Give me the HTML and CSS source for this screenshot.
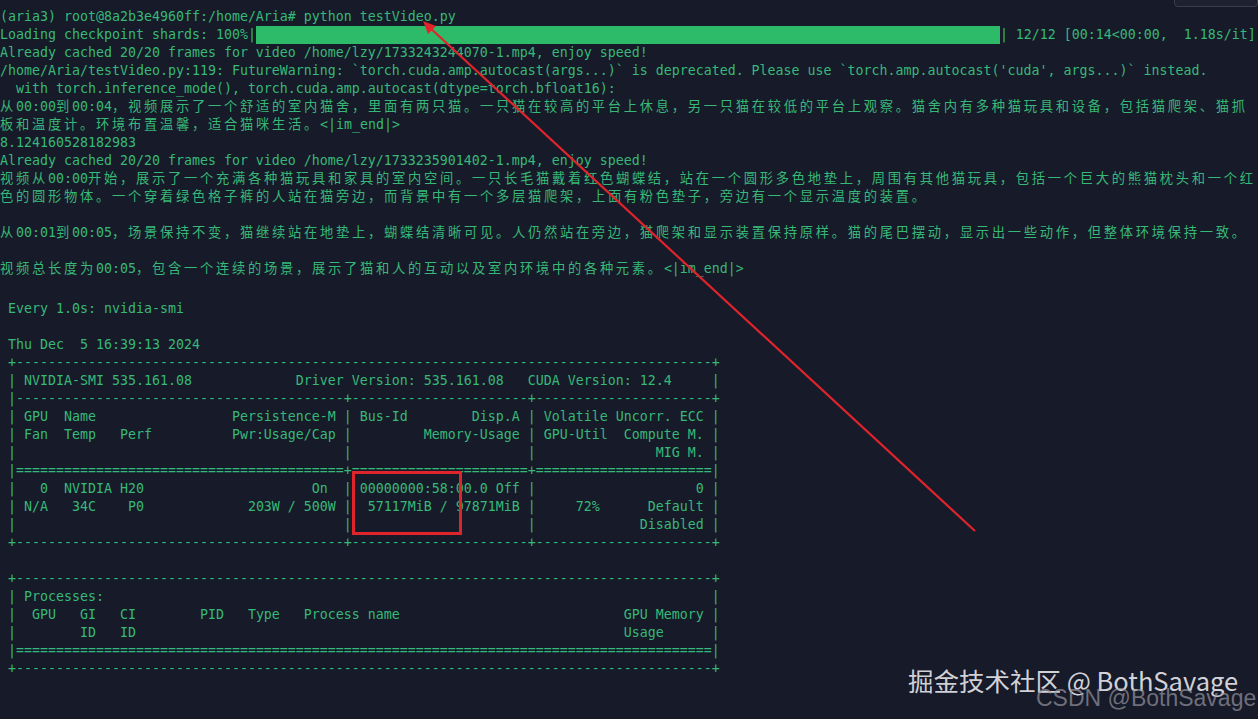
FILE: index.html
```html
<!DOCTYPE html>
<html lang="zh-CN">
<head>
    <meta charset="UTF-8">
    <meta name="viewport" content="width=device-width, initial-scale=1.0">
    <title>testVideo.py - nvidia-smi</title>
    <link rel="stylesheet" href="styles.css">
</head>
<body>
    <div class="screen">
        <pre class="term run-log">(aria3) root@8a2b3e4960ff:/home/Aria# python testVideo.py
Loading checkpoint shards: 100%|<span class="bar"></span>| 12/12 [00:14&lt;00:00,  1.18s/it]
Already cached 20/20 frames for video /home/lzy/1733243244070-1.mp4, enjoy speed!
/home/Aria/testVideo.py:119: FutureWarning: `torch.cuda.amp.autocast(args...)` is deprecated. Please use `torch.amp.autocast('cuda', args...)` instead.
  with torch.inference_mode(), torch.cuda.amp.autocast(dtype=torch.bfloat16):
<span class="w">从</span>00:00<span class="w">到</span>00:04<span class="w">，视频展示了一个舒适的室内猫舍，里面有两只猫。一只猫在较高的平台上休息，另一只猫在较低的平台上观察。猫舍内有多种猫玩具和设备，包括猫爬架、猫抓</span>
<span class="w">板和温度计。环境布置温馨，适合猫咪生活。</span>&lt;|im_end|&gt;
8.124160528182983
Already cached 20/20 frames for video /home/lzy/1733235901402-1.mp4, enjoy speed!
<span class="w">视频从</span>00:00<span class="w">开始，展示了一个充满各种猫玩具和家具的室内空间。一只长毛猫戴着红色蝴蝶结，站在一个圆形多色地垫上，周围有其他猫玩具，包括一个巨大的熊猫枕头和一个红</span>
<span class="w">色的圆形物体。一个穿着绿色格子裤的人站在猫旁边，而背景中有一个多层猫爬架，上面有粉色垫子，旁边有一个显示温度的装置。</span>

<span class="w">从</span>00:01<span class="w">到</span>00:05<span class="w">，场景保持不变，猫继续站在地垫上，蝴蝶结清晰可见。人仍然站在旁边，猫爬架和显示装置保持原样。猫的尾巴摆动，显示出一些动作，但整体环境保持一致。</span>

<span class="w">视频总长度为</span>00:05<span class="w">，包含一个连续的场景，展示了猫和人的互动以及室内环境中的各种元素。</span>&lt;|im_end|&gt;</pre>

        <pre class="term smi">Every 1.0s: nvidia-smi

Thu Dec  5 16:39:13 2024
+---------------------------------------------------------------------------------------+
| NVIDIA-SMI 535.161.08             Driver Version: 535.161.08   CUDA Version: 12.4     |
|-----------------------------------------+----------------------+----------------------+
| GPU  Name                 Persistence-M | Bus-Id        Disp.A | Volatile Uncorr. ECC |
| Fan  Temp   Perf          Pwr:Usage/Cap |         Memory-Usage | GPU-Util  Compute M. |
|                                         |                      |               MIG M. |
|=========================================+======================+======================|
|   0  NVIDIA H20                     On  | 00000000:58:00.0 Off |                    0 |
| N/A   34C    P0             203W / 500W |  57117MiB / 97871MiB |     72%      Default |
|                                         |                      |             Disabled |
+-----------------------------------------+----------------------+----------------------+

+---------------------------------------------------------------------------------------+
| Processes:                                                                            |
|  GPU   GI   CI        PID   Type   Process name                            GPU Memory |
|        ID   ID                                                             Usage      |
|=======================================================================================|
+---------------------------------------------------------------------------------------+</pre>

        <!-- annotations drawn on top of the screenshot -->
        <div class="mark-box"></div>
        <svg class="arrow" width="1258" height="719" viewBox="0 0 1258 719">
            <line x1="975" y1="531" x2="428" y2="26" stroke="#e0242c" stroke-width="2.2"/>
            <polygon points="423,21 436,26 428,34" fill="#e0242c"/>
        </svg>
        <div class="tab-corner"></div>

        <div class="watermark">
            <span class="wm-juejin">掘金技术社区 @ BothSavage</span>
            <span class="wm-csdn">CSDN @BothSavage</span>
        </div>
    </div>
</body>
</html>
```

FILE: styles.css
```css
:root {
    --bg: #161a29;
    --term-green: #38b878;
    --bar-green: #2dbb69;
    --mark-red: #e0242c;
}

html, body {
    margin: 0;
    padding: 0;
    background-color: var(--bg);
}

.screen {
    position: relative;
    width: 1258px;
    height: 719px;
    overflow: hidden;
    background-color: var(--bg);
}

.term {
    margin: 0;
    font-family: 'DejaVu Sans Mono', 'Liberation Mono', 'Noto Sans CJK SC', monospace;
    font-size: 13.29px;
    line-height: 18px;
    color: var(--term-green);
    white-space: pre;
}

.run-log {
    padding-top: 8px;
}

.smi {
    margin-top: 22px;
    padding-left: 8px;
}

/* CJK glyphs take two terminal cells */
.w {
    font-family: 'Noto Sans CJK SC', sans-serif;
    font-size: 13.3px;
    line-height: 0;
    letter-spacing: 2.7px;
}

.bar {
    display: inline-block;
    width: 744px;
    height: 18px;
    vertical-align: -5px;
    background-color: var(--bar-green);
}

.mark-box {
    position: absolute;
    left: 352px;
    top: 471px;
    width: 104px;
    height: 58px;
    border: 3px solid var(--mark-red);
}

.arrow {
    position: absolute;
    left: 0;
    top: 0;
    pointer-events: none;
}

.tab-corner {
    position: absolute;
    right: 0;
    top: -6px;
    width: 82px;
    height: 11px;
    border: 1px solid #3a3e4c;
    border-radius: 4px;
    background-color: #1d2130;
}

.watermark {
    position: absolute;
    left: 908px;
    top: 662px;
    width: 350px;
    height: 57px;
    font-family: 'Noto Sans CJK SC', 'Noto Sans', sans-serif;
}

.wm-juejin {
    position: absolute;
    left: 0;
    top: 0;
    font-size: 25.5px;
    line-height: 36px;
    white-space: nowrap;
    color: rgba(236, 236, 240, 0.88);
}

.wm-csdn {
    position: absolute;
    left: 128px;
    top: 21px;
    font-family: 'Liberation Sans', 'Noto Sans', sans-serif;
    font-size: 23px;
    line-height: 30px;
    white-space: nowrap;
    color: rgba(150, 150, 160, 0.7);
}
```
